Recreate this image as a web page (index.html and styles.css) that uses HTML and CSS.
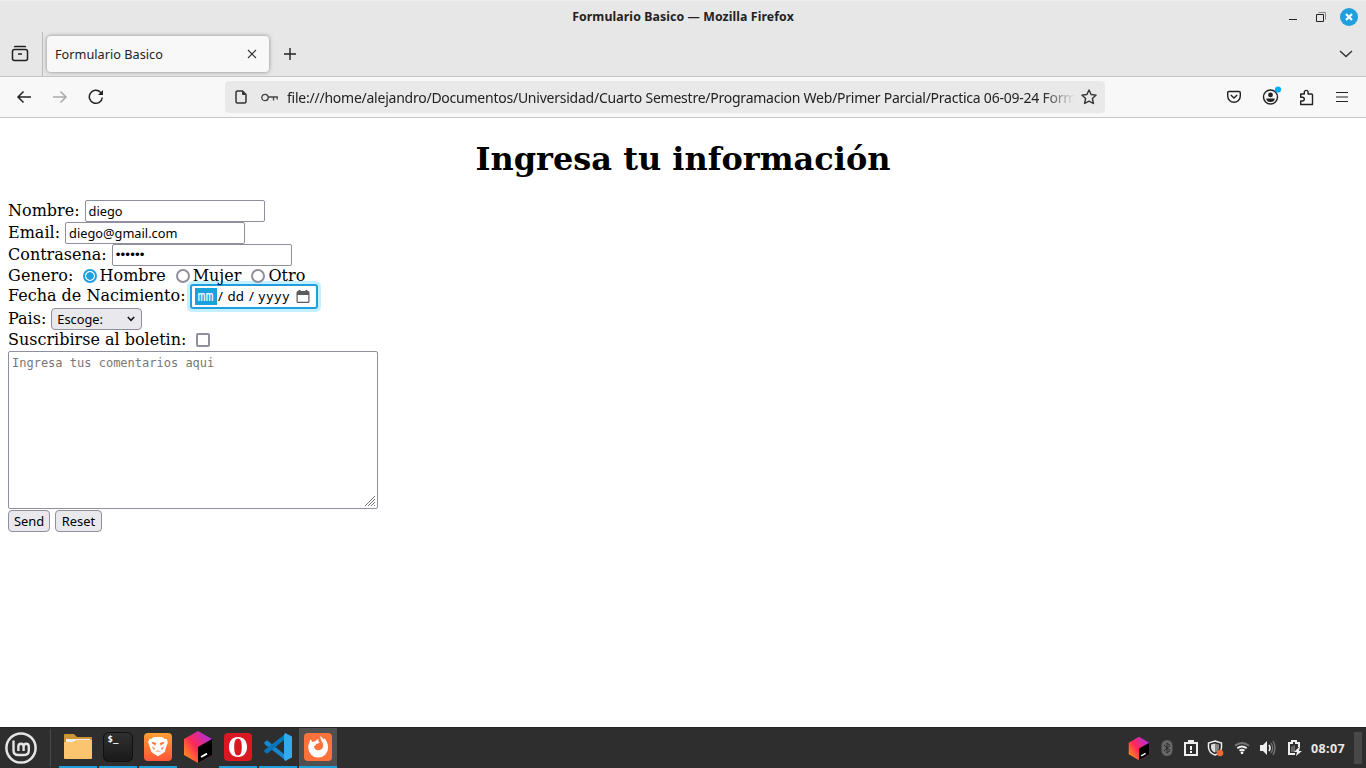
FILE: index.html
```html
<!DOCTYPE html>
<html lang="es">
<head>
<meta charset="utf-8">
<title>Formulario Basico</title>
<link rel="stylesheet" href="styles.css">
</head>
<body>
<header class="titlebar">
  <span class="window-title">Formulario Basico — Mozilla Firefox</span>
  <div class="window-controls">
    <svg width="70" height="20" viewBox="0 0 70 20"><path d="M0 12.500h8" stroke="#222"/><path d="M29.500 5.500h7v7" fill="none" stroke="#888"/><path d="M27.500 7.500h7v7h-7z" fill="none" stroke="#222"/><circle cx="60" cy="10" r="9" fill="#209fdf"/><path d="M57 7l6 6m0-6l-6 6" stroke="#fff" stroke-width="2.200"/></svg>
  </div>
</header>
<nav class="tabbar">
  <div class="firefox-view"><svg width="18" height="18" fill="none" stroke="#202020" stroke-width="1.5"><path d="M3.500 2.200Q3.500 1.500 4.500 1.500h9Q14.500 1.500 14.500 2.200"/><rect x="1.500" y="4.500" width="15" height="11" rx="2"/><path d="M7 9h4"/></svg></div>
  <div class="tab"><span class="tab-label">Formulario Basico</span><svg width="10" height="10"><path d="M1 1l8 8M9 1L1 9" stroke="#333" stroke-width="1.100"/></svg></div>
  <svg class="new-tab" width="14" height="14"><path d="M7 1v12M1 7h12" stroke="#222" stroke-width="1.400"/></svg>
  <svg class="all-tabs" width="14" height="10" fill="none"><path d="M1 2l6 5.500L13 2" stroke="#333" stroke-width="1.400"/></svg>
</nav>
<div class="toolbar">
  <svg class="back" width="16" height="16" fill="none" stroke="#222" stroke-width="1.500"><path d="M15 8H2M7.500 2.500L2 8l5.500 5.500"/></svg>
  <svg class="forward" width="16" height="16" fill="none" stroke="#aaa" stroke-width="1.500"><path d="M1 8h13M8.500 2.500L14 8l-5.500 5.500"/></svg>
  <svg class="reload" width="16" height="16" fill="none" stroke="#222" stroke-width="1.500"><path d="M14.300 8.500A6.500 6.500 0 1 1 12.500 3.300L13.500 4.500"/><path d="M15 1v5h-5z" fill="#222" stroke="none"/></svg>
  <div class="urlbar">
    <svg class="page-icon" width="12" height="14" fill="none" stroke="#333" stroke-width="1.500"><path d="M2.500 1h5L11 4.500v7q0 1.500-1.500 1.500h-7Q1 13 1 11.500v-9Q1 1 2.500 1z"/><path d="M7 1l4 4H8Q7 5 7 4z" fill="#333" stroke="none"/></svg>
    <svg class="key" width="17" height="9" fill="none" stroke="#444" stroke-width="1.300"><circle cx="4" cy="4.500" r="3.200"/><path d="M7.200 4h9v2.500M12.500 4v3.500"/></svg>
    <div class="url-clip"><span class="url">file:///home/alejandro/Documentos/Universidad/Cuarto Semestre/Programacion Web/Primer Parcial/Practica 06-09-24 Form</span></div>
    <svg class="star" width="16" height="16" viewBox="0 0 16 16" fill="none" stroke="#333" stroke-width="1.400" stroke-linejoin="round"><path d="M8 1l2.100 4.500 5 .6-3.700 3.400 1 5L8 12.100 3.600 14.500l1-5L.9 6.100l5-.6z"/></svg>
  </div>
  <svg class="pocket" width="14" height="14" fill="none" stroke="#222" stroke-width="1.400"><path d="M2 1.500h10q1.300 0 1.300 1.300V6A6.300 6.300 0 0 1 .7 6V2.800Q.7 1.500 2 1.500z"/><path d="M3.800 5l3.200 3 3.200-3"/></svg>
  <svg class="account" width="20" height="20"><circle cx="8.500" cy="11" r="7" fill="none" stroke="#222" stroke-width="1.400"/><circle cx="8.500" cy="8.900" r="2.400" fill="#222"/><path d="M4.200 12.500h8.600q-.4 3.500-4.300 3.500t-4.300-3.500z" fill="#222"/><circle cx="16" cy="3.500" r="3.100" fill="#00aeff"/></svg>
  <svg class="extensions" width="15" height="17" fill="none" stroke="#222" stroke-width="1.400"><path d="M1.700 15.500V12h1.700a1.900 1.900 0 0 0 0-3.800H1.700V5h3.600V3.300a1.900 1.900 0 0 1 3.800 0V5h3.400q1 0 1 1v9.500z" stroke-linejoin="round"/></svg>
  <svg class="menu" width="12" height="12"><path d="M0 1.500h12M0 6h12M0 10.500h12" stroke="#222" stroke-width="1.200"/></svg>
</div>
<main class="page">
  <h1>Ingresa tu información</h1>
  <form>
    <div class="row"><label>Nombre:</label><span class="field">diego</span></div>
    <div class="row"><label>Email:</label><span class="field">diego@gmail.com</span></div>
    <div class="row"><label>Contrasena:</label><span class="field password">••••••</span></div>
    <div class="row gender"><label>Genero:</label><i class="radio checked"></i><span class="choice">Hombre</span><i class="radio"></i><span class="choice">Mujer</span><i class="radio"></i><span class="choice">Otro</span></div>
    <div class="row birth"><label>Fecha de Nacimiento:</label>
      <div class="date"><span class="month">mm</span><span class="slash">/</span><span class="day">dd</span><span class="slash">/</span><span class="year">yyyy</span><svg width="14" height="13"><path d="M2.500 0h2v1h5V0h2v1H12q1.500 0 1.500 1.500v9Q13.500 13 12 13H2Q.5 13 .5 11.500v-9Q.5 1 2 1h.5zM1.700 5v6.800h10.600V5z" fill="#5b5b5b" fill-rule="evenodd"/></svg></div>
    </div>
    <div class="row country"><label>Pais:</label><span class="select">Escoge:<svg width="8" height="6" fill="none"><path d="M.8 1L4 4.300 7.200 1" stroke="#111" stroke-width="1.500"/></svg></span></div>
    <div class="row newsletter"><label>Suscribirse al boletin:</label><i class="checkbox"></i></div>
    <div class="comments">Ingresa tus comentarios aqui<svg class="grip" width="12" height="12"><path d="M1 11L11 1M4 11l7-7M7 11l4-4M10 11l1-1" stroke="#777"/></svg></div>
    <div class="buttons"><span class="button send">Send</span><span class="button reset">Reset</span></div>
  </form>
</main>
<footer class="taskbar">
  <svg class="mint" width="32" height="32" fill="none" stroke="#e5e5e5"><circle cx="16" cy="16" r="14.600" stroke-width="2.500"/><path d="M8.500 8.500v9.700q0 4.800 4.800 4.800h6q4.500 0 4.500-4.500v-4q0-2.800-2.600-2.800t-2.600 2.800V19m0-4.500q0-2.800-2.600-2.800t-2.600 2.800V19" stroke-width="2.400"/></svg>
  <i class="divider"></i>
  <div class="apps">
    <div class="app open"><svg width="30" height="30"><path d="M1 3q0-1 1-1h9l3 3h14q1 0 1 1v4H1z" fill="#cd9437"/><path d="M3 7h24v5H3z" fill="#eee"/><path d="M1 10h9l3-2h16v18q0 1-1 1H2q-1 0-1-1z" fill="#fac56e"/></svg></div>
    <div class="app open"><svg width="30" height="30"><defs><linearGradient id="term" x2="0" y2="1"><stop stop-color="#303030"/><stop offset="1" stop-color="#191919"/></linearGradient></defs><rect x=".5" y=".5" width="29" height="29" rx="5" fill="url(#term)" stroke="#101010"/><text x="4.500" y="10" class="prompt">$_</text></svg></div>
    <div class="app open"><svg width="30" height="30"><defs><linearGradient id="brave" x2="0" y2="1"><stop stop-color="#ff9f32"/><stop offset="1" stop-color="#ff5638"/></linearGradient></defs><rect x="1" y="1" width="28" height="28" rx="4" fill="url(#brave)"/><path d="M10.500 5h9l2 2 2-.2 1.500 3.500-1 2-2.200 7.500-2 1.500-4.800 3-4.800-3-2-1.500L6 12.300l-1-2 1.500-3.500 2 .2z" fill="#fff"/><path d="M9.500 10l3.800 1-1 2.500L8.500 11zM20.500 10l-3.800 1 1 2.500 3.800-2.500zM8.700 14l3.300 2.500-1 1.500zM21.300 14L18 16.500l1 1.500zM12 20l3-1.700 3 1.700-3-.8z" fill="#ff713a"/></svg></div>
    <div class="app"><svg width="30" height="34" viewBox="0 0 30 34"><defs><linearGradient id="jb" y1=".8" x2="1" y2="0"><stop stop-color="#ff9419"/><stop offset=".4" stop-color="#ff2857"/><stop offset="1" stop-color="#9f30ff"/></linearGradient></defs><g id="toolbox"><path d="M15 1l14 8v16l-14 8-14-8V9z" fill="url(#jb)"/><path d="M15 17l14-8v16l-14 8z" fill="#000"/><path d="M18 27l6-3.400" stroke="#fff" stroke-width="1.800"/></g></svg></div>
    <div class="app open"><svg width="30" height="30"><rect x="1" y="1" width="28" height="28" rx="4" fill="#d91821"/><path fill-rule="evenodd" fill="#fff" d="M15 5c5.700 0 9 4 9 10s-3.300 10-9 10-9-4-9-10 3.300-10 9-10zM15 6.500c-2.800 0-3.800 3.500-3.800 8.500s1 8.500 3.800 8.500 3.800-3.500 3.800-8.500-1-8.500-3.800-8.500z"/></svg></div>
    <div class="app open"><svg width="30" height="30"><path d="M1 10.500l3-2.300L23.500 24v5L2 12.500z" fill="#1686ce"/><path d="M1 19.500l3 2.300L23.500 6V1L1.500 18z" fill="#0875b9"/><path d="M22 1l7 3.500v21L22 29l-1-2V3z" fill="#32aaf0"/></svg></div>
    <div class="app open active"><svg width="30" height="30"><rect x="1" y="1" width="28" height="28" rx="4" fill="#ff713a"/><path d="M15 25.500A9.800 9.800 0 0 1 5.200 15.800c0-3.800 1.600-5.200 2-8.300 1.200.7 1.700 1.400 2 2.400q1.300-.6 2.700-.2 1.200-2.200 3.500-2.700-.8 2.400 1.200 3.500-1 1.400-3.700 1.400c.3 1.300-.8 1.800-2 2.100.2 3 2 4.300 4.300 4.300 3.200 0 5-2.200 5-5 0-3.600-3.300-5-2.900-9 2 1 2.700 2.300 3.300 3.500l.5-1.700c2 2 4 5.400 4 9.400A9.800 9.800 0 0 1 15 25.500z" fill="#fff"/></svg></div>
  </div>
  <div class="tray">
    <svg width="22" height="25" viewBox="0 0 30 34"><use href="#toolbox"/></svg>
    <svg class="bluetooth" width="12" height="16"><rect x=".5" width="11" height="16" rx="5.500" fill="#666"/><path d="M3 5l6 5.500L6 13V3l3 2.500L3 11" fill="none" stroke="#292929"/></svg>
    <svg class="clip" width="14" height="16"><path d="M1 3h12v12H1z" fill="none" stroke="#eee" stroke-width="2"/><path d="M4 0h6v4H4z" fill="#eee"/><path d="M7 6v4M7 11v2" stroke="#fff" stroke-width="2"/></svg>
    <svg class="shield" width="17" height="17"><path d="M8 1l6.500 2v4.500Q14 13 8 15 2 13 1.500 7.500V3z" fill="#292929" stroke="#eee" stroke-width="1.500"/><path d="M8 3.500v9Q4.200 11 4 7.500v-3z" fill="#ddd"/><path d="M8 3.500v9Q11.800 11 12 7.500v-3z" fill="#888"/><circle cx="13" cy="13" r="3.300" fill="#e66b35"/></svg>
    <svg class="wifi" width="16" height="14" fill="none" stroke-width="1.800"><path d="M1 4.700q7-5.500 14 0" stroke="#777"/><path d="M3.300 7.300q4.700-3.700 9.400 0M5.500 9.700q2.500-2 5 0" stroke="#eee"/><circle cx="8" cy="11.800" r="1.400" fill="#fff"/></svg>
    <svg class="volume" width="16" height="14"><path d="M0 4h3l4-4v14l-4-4H0z" fill="#eee"/><path d="M9 4q2 3 0 6" fill="none" stroke="#eee" stroke-width="1.700"/><path d="M11 2q3.500 5 0 10M13 0q4 7 0 14" fill="none" stroke="#777" stroke-width="1.300"/></svg>
    <svg class="battery" width="15" height="16"><path d="M7 14H1V3h3V1h4v2h3v4" fill="none" stroke="#eee" stroke-width="2"/><path d="M3 7l4-2v7H3z" fill="#666"/><path d="M11 7L6 12h3l-1 4 6-5h-3l1-4z" fill="#eee"/></svg>
    <time>08:07</time><i class="show-desktop"></i>
  </div>
</footer>
</body>
</html>
```
FILE: styles.css
```css
* { box-sizing: border-box; }
body { margin: 0; width: 1366px; height: 768px; overflow: hidden; display: flex; flex-direction: column; background: #fff; font: 13px "Noto Sans", sans-serif; color: #222; }
svg { display: block; flex: none; }
.titlebar { height: 32px; background: #e7e7e7; border-top: 1px solid #eee; display: grid; grid-template-columns: 1fr auto 1fr; align-items: center; }
.window-title { grid-column: 2; font-weight: 700; font-size: 12.3px; letter-spacing: .1px; white-space: nowrap; }
.window-controls { justify-self: end; padding-right: 7px; }
.tabbar { height: 45px; background: #e7e7e7; border-bottom: 1px solid #c5c5c5; display: flex; align-items: center; }
.firefox-view { width: 43px; height: 44px; border-right: 1px solid #bbb; padding: 13px 0 0 11px; }
.tab { width: 222px; height: 36px; margin-left: 4px; background: #f8f8f8; border-radius: 4px; box-shadow: 0 0 4px #888; display: flex; align-items: center; justify-content: space-between; padding: 0 12px 0 8px; }
.tab-label { font-size: 12.7px; letter-spacing: .02px; }
.new-tab { margin-left: 14px; }
.all-tabs { margin-left: auto; margin-right: 13px; }
.toolbar { height: 41px; background: #f8f8f8; border-bottom: 1px solid #c7c7c7; display: flex; align-items: center; padding-left: 16px; }
.forward { margin-left: 20px; }
.reload { margin-left: 20px; }
.urlbar { width: 880px; height: 32px; margin-left: 121px; background: #e9e9e9; border-radius: 4px; display: flex; align-items: center; padding-left: 10px; }
.key { margin-left: 14px; }
.url-clip { width: 788px; margin-left: 9px; overflow: hidden; white-space: nowrap; mask-image: linear-gradient(to right, #000 755px, transparent 788px); }
.url { font-size: 14px; letter-spacing: -.24px; }
.star { margin-left: 6px; }
.pocket { margin-left: 122px; }
.account { margin-left: 21px; margin-top: -3px; }
.extensions { margin-left: 17px; }
.menu { margin-left: 22px; }

.page { flex: 1; padding: 22px 8px 0; font: 16px/19px "DejaVu Serif", serif; color: #000; }
h1 { margin: 0 0 21px; font-size: 32px; line-height: 39px; text-align: center; }
.row { display: flex; height: 22px; align-items: center; white-space: nowrap; }
.row label { margin-top: -1px; }
.field { width: 180px; height: 22px; margin-left: 5px; padding-left: 3px; border: 1px solid #8f8f9d; border-radius: 2px; font: 12.8px/20px "Noto Sans", sans-serif; }
.password { font: 13.3px/20px "Liberation Sans", sans-serif; letter-spacing: .15px; }
.gender { height: 19px; position: relative; z-index: 1; }
.gender label { letter-spacing: .12px; }
.radio { width: 14px; height: 14px; margin-left: 10px; margin-right: 3px; border: 2px solid #8f8f9d; border-radius: 50%; }
.gender label + .radio { margin-left: 9px; }
.checked { border-color: #209fdf; background: radial-gradient(circle, #209fdf 3.5px, #fff 4px); }
.choice { margin-top: -1px; }
.birth { height: 23px; }
.birth label { margin-top: -2px; }
.date { width: 126px; height: 23px; margin-left: 5px; display: flex; align-items: center; background: #fff; border: 1px solid #209fdf; border-radius: 2px; box-shadow: 0 0 0 1px #209fdf, 0 0 0 4px #c4f0ff; font: 13.3px/17px "Noto Sans", sans-serif; padding-left: 3px; }
.month { width: 22px; height: 17px; text-align: center; color: #fff; background: #209fdf; font-family: "DejaVu Sans Mono", monospace; }
.slash { width: 8px; text-align: center; }
.day { width: 21px; padding-left: 3px; }
.date .day + .slash { width: 12px; }
.year { width: 38px; letter-spacing: 1.200px; padding-left: 1px; }
.select { width: 91px; height: 22px; margin-left: 5px; display: flex; align-items: center; justify-content: space-between; padding: 0 6px 0 5px; background: #e9e9ed; border: 1px solid #8f8f9d; border-radius: 4px; font: 12.8px "Noto Sans", sans-serif; }
.newsletter { height: 20px; }
.checkbox { width: 14px; height: 14px; margin-left: 10px; border: 2px solid #8f8f9d; border-radius: 2px; }
.comments { position: relative; width: 370px; height: 158px; margin-top: 1px; padding: 3px; border: 1px solid #8f8f9d; border-radius: 2px; font: 12px/17px "DejaVu Sans Mono", monospace; color: #777; }
.grip { position: absolute; right: 1px; bottom: 1px; }
.buttons { display: flex; gap: 5px; margin-top: 1px; }
.button { height: 22px; border: 1px solid #8f8f9d; border-radius: 4px; background: #e9e9ed; text-align: center; font: 12.900px/20px "Noto Sans", sans-serif; }
.send { width: 42px; }
.reset { width: 47px; }

.taskbar { height: 41px; background: #2e2e2e; border-top: 1px solid #252525; display: flex; align-items: center; padding-left: 5px; }
.divider { width: 1px; height: 38px; margin-left: 13px; background: #484848; }
.apps { display: flex; gap: 2px; margin-left: 8px; height: 40px; }
.app { width: 38px; height: 40px; display: flex; align-items: center; justify-content: center; border-bottom: 2px solid transparent; }
.open { border-bottom-color: #209fdf; }
.active { background-color: #505050; }
.prompt { font: bold 9px "DejaVu Sans Mono", monospace; fill: #fff; }
.tray { display: flex; align-items: center; margin-left: auto; margin-right: 4px; height: 40px; }
.bluetooth { margin-left: 11px; }
.clip { margin-left: 11px; }
.shield { margin-left: 9px; }
.wifi { margin-left: 10px; }
.volume { margin-left: 10px; }
.battery { margin-left: 12px; }
time { width: 35px; margin-left: 8px; color: #e8e8e8; font-size: 12.500px; letter-spacing: .4px; font-weight: 700; white-space: nowrap; }
.show-desktop { width: 8px; height: 32px; margin-left: 8px; background: #484848; }
```
